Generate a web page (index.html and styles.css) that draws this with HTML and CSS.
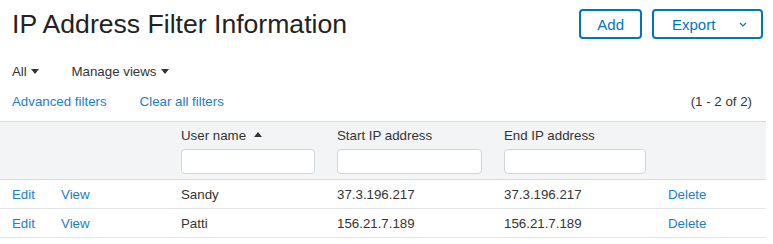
FILE: index.html
```html
<!DOCTYPE html>
<html lang="en">
<head>
    <meta charset="UTF-8">
    <meta name="viewport" content="width=device-width, initial-scale=1.0">
    <title>IP Address Filter Information</title>
    <link rel="stylesheet" href="styles.css">
</head>
<body>
    <header class="page-header">
        <h1>IP Address Filter Information</h1>
        <div class="actions">
            <button class="btn">Add</button>
            <button class="btn btn-export">Export
                <svg class="chevron" width="8" height="5" viewBox="0 0 8 5"><path d="M1 1l3 3 3-3" fill="none" stroke="currentColor" stroke-width="1.2"/></svg>
            </button>
        </div>
    </header>
    <div class="views">
        <span class="menu">All <span class="caret"></span></span>
        <span class="menu">Manage views <span class="caret"></span></span>
    </div>
    <div class="filters">
        <a href="#" class="link">Advanced filters</a>
        <a href="#" class="link">Clear all filters</a>
        <span class="count">(1 - 2 of 2)</span>
    </div>
    <table class="grid">
        <colgroup>
            <col class="c-edit">
            <col class="c-view">
            <col class="c-user">
            <col class="c-start">
            <col class="c-end">
            <col class="c-del">
        </colgroup>
        <thead>
            <tr>
                <th></th>
                <th></th>
                <th><div class="th-label">User name <span class="sort-up"></span></div><input type="text"></th>
                <th><div class="th-label">Start IP address</div><input type="text"></th>
                <th><div class="th-label">End IP address</div><input type="text"></th>
                <th></th>
            </tr>
        </thead>
        <tbody>
            <tr>
                <td><a href="#" class="link">Edit</a></td>
                <td><a href="#" class="link">View</a></td>
                <td>Sandy</td>
                <td>37.3.196.217</td>
                <td>37.3.196.217</td>
                <td><a href="#" class="link">Delete</a></td>
            </tr>
            <tr>
                <td><a href="#" class="link">Edit</a></td>
                <td><a href="#" class="link">View</a></td>
                <td>Patti</td>
                <td>156.21.7.189</td>
                <td>156.21.7.189</td>
                <td><a href="#" class="link">Delete</a></td>
            </tr>
        </tbody>
    </table>
</body>
</html>
```

FILE: styles.css
```css
body {
    font-family: 'Liberation Sans', Arial, sans-serif;
    font-size: 13.3px;
    color: #333;
    margin: 0;
    background: #fff;
}
.page-header {
    display: flex;
    justify-content: space-between;
    align-items: center;
    padding: 9px 10px 0 12px;
    height: 30px;
}
h1 {
    margin: 0;
    font-size: 26.6px;
    font-weight: normal;
    color: #222;
}
.actions {
    display: flex;
    gap: 10px;
}
.btn {
    font-family: inherit;
    font-size: 15px;
    color: #0074c2;
    background: #fff;
    border: 2px solid #0074c2;
    border-radius: 4px;
    height: 30px;
    padding: 0 16px;
    cursor: pointer;
}
.btn-export {
    width: 111px;
    padding: 0 0 0 18px;
    text-align: left;
    display: flex;
    align-items: center;
}
.chevron {
    margin-left: 24px;
    color: #0074c2;
}
.views {
    display: flex;
    gap: 32px;
    padding: 0 12px;
    margin-top: 24px;
    height: 18px;
    line-height: 18px;
}
.caret {
    display: inline-block;
    width: 0;
    height: 0;
    border-left: 4px solid transparent;
    border-right: 4px solid transparent;
    border-top: 5px solid #333;
    vertical-align: 2px;
    margin-left: 1px;
}
.filters {
    display: flex;
    padding: 0 21px 0 12px;
    margin-top: 12px;
    height: 18px;
    line-height: 18px;
}
.filters .link + .link {
    margin-left: 33px;
}
.count {
    margin-left: auto;
}
.link {
    color: #1b7dc9;
    text-decoration: none;
}
.grid {
    margin-top: 10px;
    width: 766px;
    border-collapse: collapse;
    table-layout: fixed;
}
.c-edit { width: 49px; }
.c-view { width: 120px; }
.c-user { width: 156px; }
.c-start { width: 167px; }
.c-end { width: 164px; }
.c-del { width: 110px; }
thead th {
    background: #f2f4f5;
    border-top: 1px solid #d5dadd;
    border-bottom: 1px solid #d5dadd;
    font-weight: normal;
    text-align: left;
    padding: 5px 10px 5px 12px;
    vertical-align: top;
    height: 47px;
}
.th-label {
    height: 17px;
    line-height: 17px;
    margin-bottom: 5px;
}
.sort-up {
    display: inline-block;
    width: 0;
    height: 0;
    border-left: 4px solid transparent;
    border-right: 4px solid transparent;
    border-bottom: 5px solid #333;
    vertical-align: 3px;
    margin-left: 4px;
}
th input {
    display: block;
    box-sizing: border-box;
    width: 100%;
    height: 25px;
    border: 1px solid #cfd6db;
    border-radius: 4px;
    background: #fff;
    margin: 0;
}
tbody td {
    padding: 0 10px 0 12px;
    height: 28px;
    border-bottom: 1px solid #e3e6e8;
}
```
